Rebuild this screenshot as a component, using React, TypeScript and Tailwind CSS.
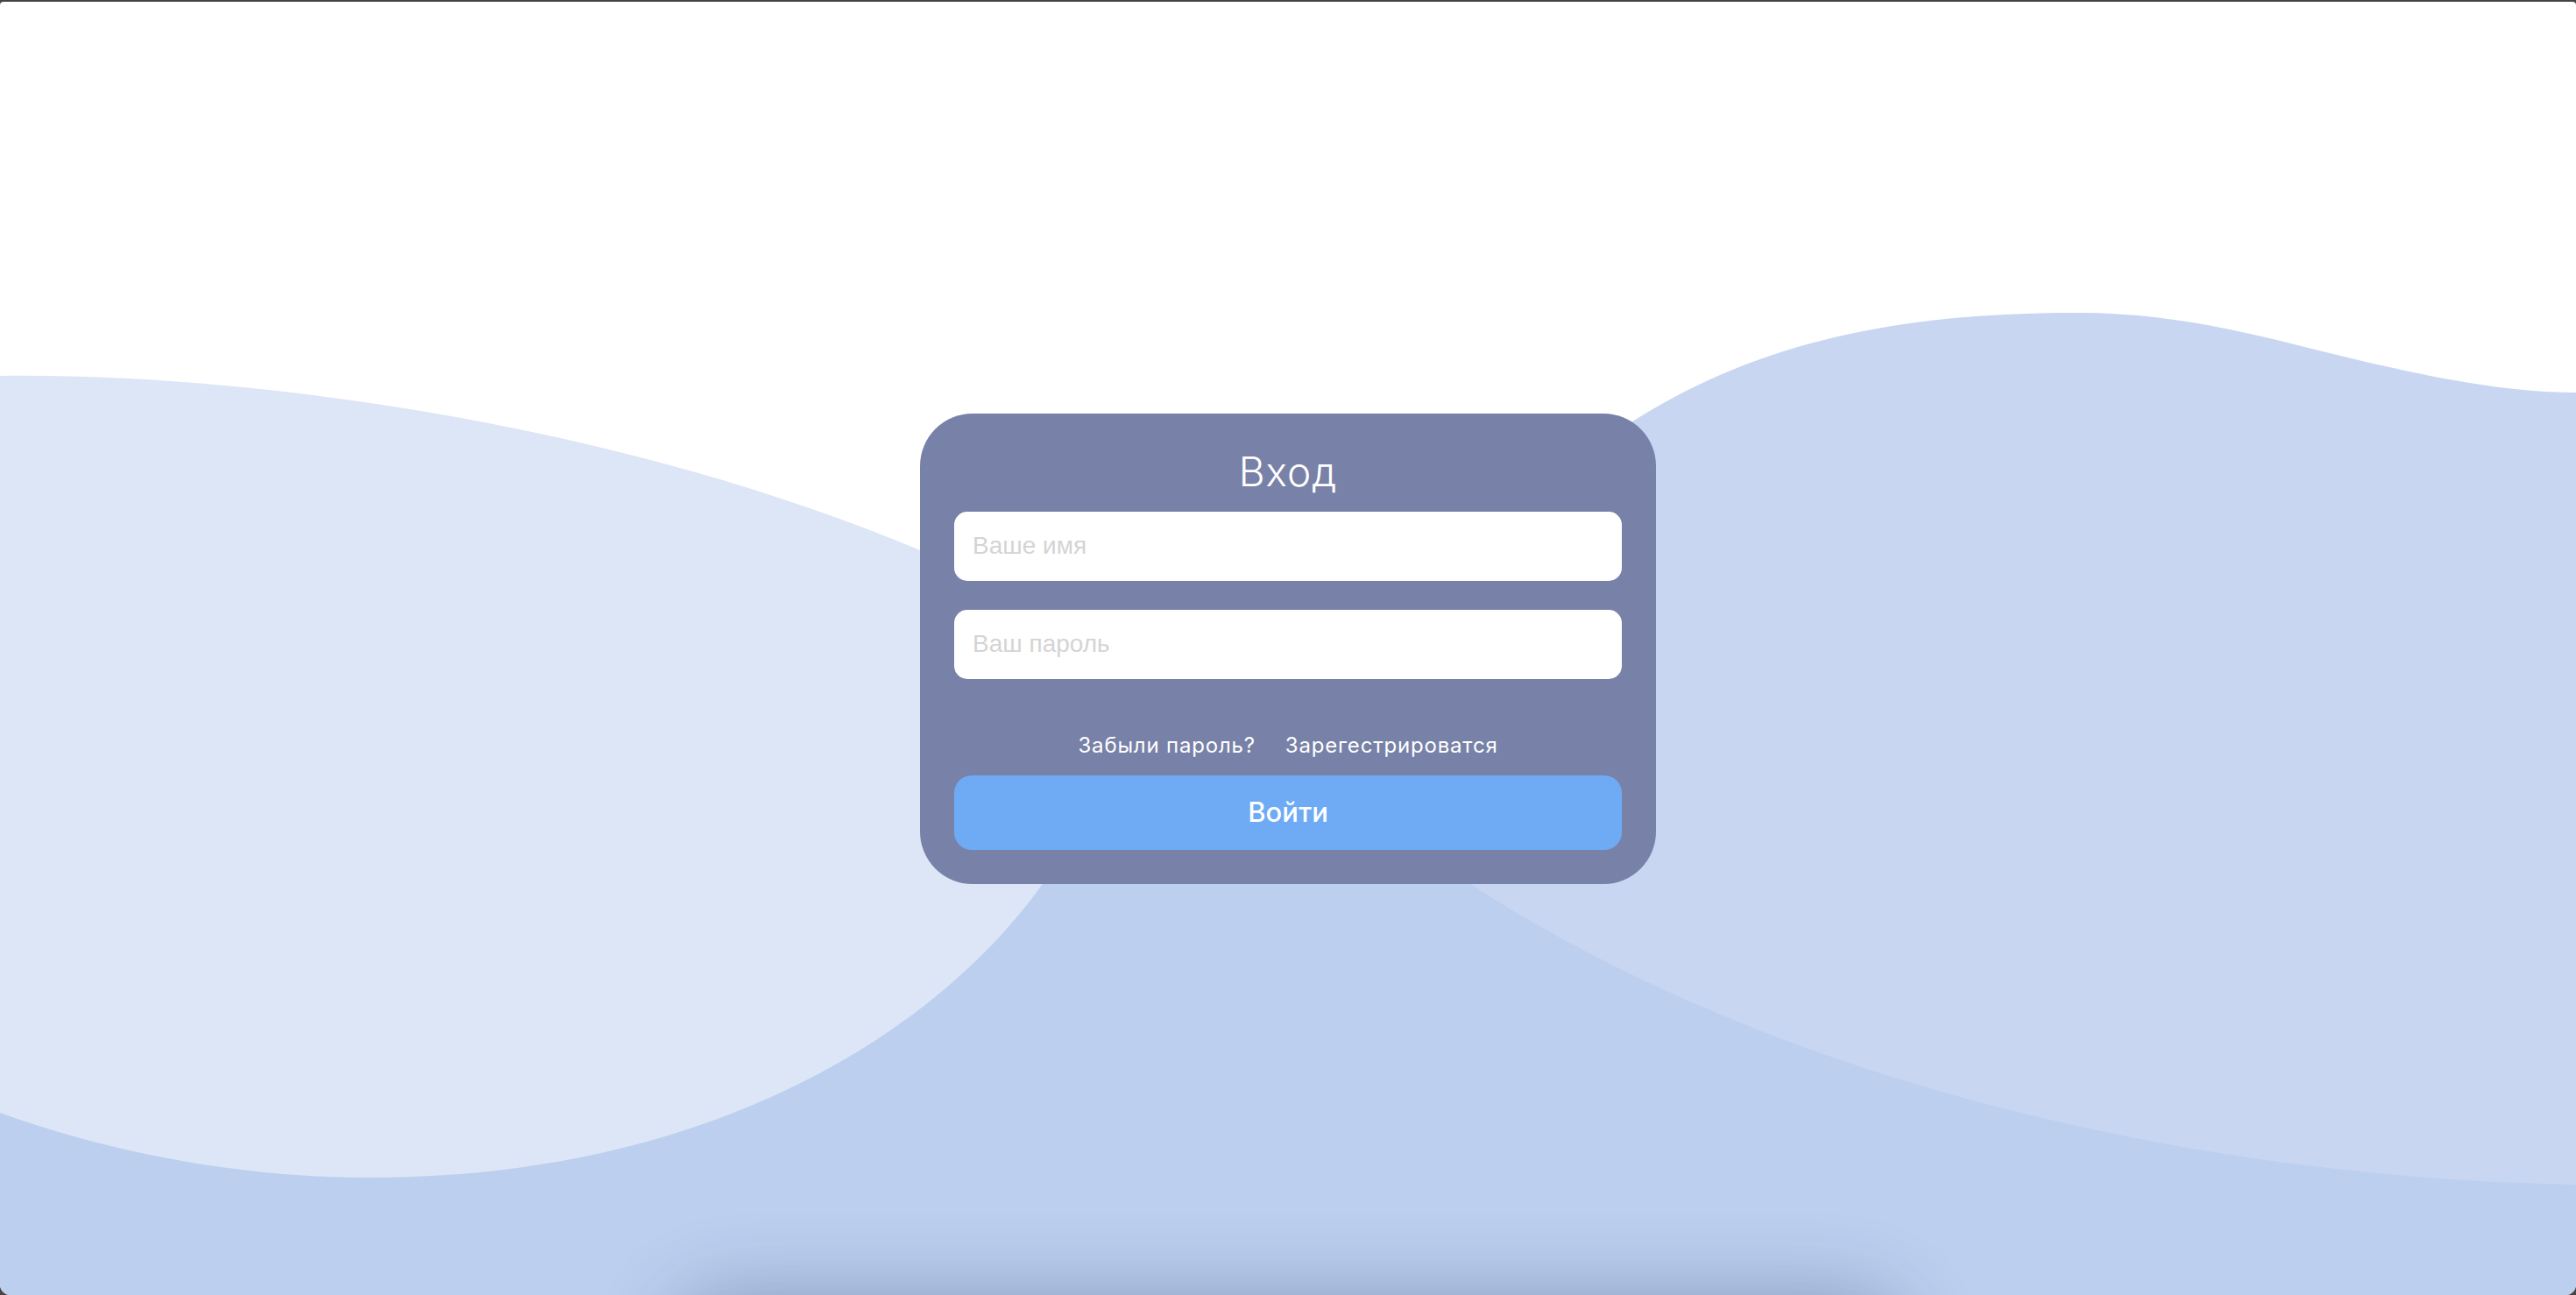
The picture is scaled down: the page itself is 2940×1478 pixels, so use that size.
import React from 'react'

function Waves() {
  return (
    <svg
      className="absolute inset-0 h-full w-full"
      viewBox="0 0 2940 1476"
      preserveAspectRatio="none"
    >
      <rect x="0" y="900" width="2940" height="576" fill="#bccfef" />
      <path
        d="M0,427 C300,423 750,488 1100,648 L1300,758 L1196,998 C1080,1168 820,1342 420,1342 C260,1342 110,1308 0,1268 Z"
        fill="#dce6f6"
      />
      <path
        d="M1700,618 C1900,398 2130,355 2372,355 C2500,355 2600,388 2700,411 C2800,434 2870,446 2940,446 L2940,1350 C2500,1343 2000,1228 1650,988 Z"
        fill="#c8d6f2"
      />
    </svg>
  )
}

function LoginCard() {
  return (
    <form
      className="relative z-10 flex w-[840px] flex-col rounded-[60px] bg-[#7881a7] px-[39px] pb-[39px] pt-[38px]"
      onSubmit={(e) => e.preventDefault()}
    >
      <h1 className="text-center font-['Inter',sans-serif] text-[46px] font-light leading-[56px] tracking-[1px] text-white">
        Вход
      </h1>
      <div className="mt-[18px] flex flex-col gap-[33px]">
        <input
          type="text"
          placeholder="Ваше имя"
          className="h-[79px] w-full rounded-[15px] bg-white px-[21px] font-['Liberation_Sans',sans-serif] text-[28px] text-[#333] outline-none placeholder:text-[#d4d4d4]"
        />
        <input
          type="password"
          placeholder="Ваш пароль"
          className="h-[79px] w-full rounded-[15px] bg-white px-[21px] font-['Liberation_Sans',sans-serif] text-[28px] text-[#333] outline-none placeholder:text-[#d4d4d4]"
        />
      </div>
      <div className="mt-[61px] flex justify-center gap-[34px] font-['Inter',sans-serif] text-[24px] leading-[30px] tracking-[0.8px] text-white">
        <a href="#">Забыли пароль?</a>
        <a href="#">Зарегестрироватся</a>
      </div>
      <button
        type="submit"
        className="mt-[19px] h-[85px] w-full rounded-[20px] bg-[#6eabf4] font-['Inter',sans-serif] text-[31px] font-medium text-white"
      >
        Войти
      </button>
    </form>
  )
}

export default function App() {
  return (
    <div className="h-screen w-full overflow-hidden bg-[#454545] pt-[2px]">
      <div className="relative flex h-full w-full items-center justify-center overflow-hidden rounded-b-[12px] rounded-t-[4px] bg-white">
        <Waves />
        <LoginCard />
        <div className="absolute left-1/2 top-full h-[200px] w-[1400px] -translate-x-1/2 rounded-[60px] shadow-[0_0_90px_rgba(20,40,90,0.3)]" />
      </div>
    </div>
  )
}
